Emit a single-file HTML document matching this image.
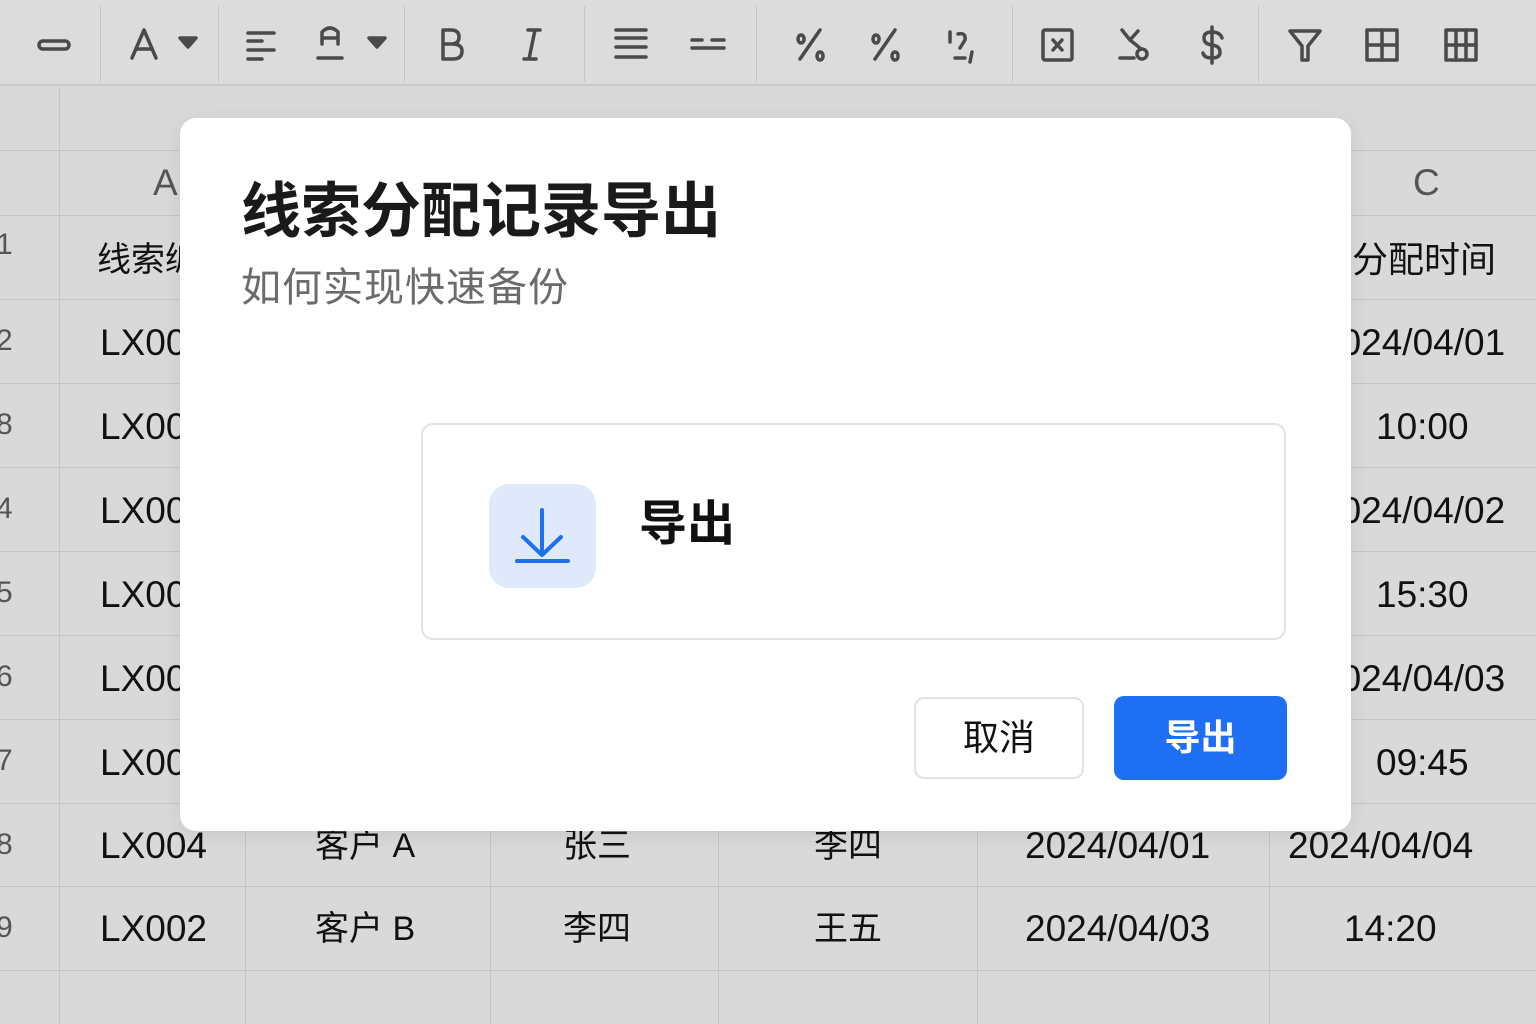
<!DOCTYPE html>
<html><head><meta charset="utf-8"><style>
*{margin:0;padding:0;box-sizing:border-box}
body{width:1536px;height:1024px;overflow:hidden;background:#d9d9d9;position:relative;font-family:"Liberation Sans","Noto Sans CJK SC",sans-serif;color:#111}
.tb{position:absolute;left:0;top:0;width:1536px;height:86px;background:#dcdcdc;border-bottom:2px solid #c8c8c8}
.sep{position:absolute;top:6px;width:1px;height:76px;background:#c6c6c6}
.ic{position:absolute;top:22px}
.h{position:absolute;height:1px;background:#c4c4c4;left:0;width:1536px}
.v{position:absolute;width:1px;background:#c4c4c4;top:150px;height:874px}
.t{position:absolute;font-size:37px;white-space:nowrap;line-height:40px}
.c{font-size:34px}
.rn{position:absolute;font-size:30px;color:#555;left:-4px;line-height:40px}
.dlg{position:absolute;left:180px;top:118px;width:1171px;height:713px;background:#fff;border-radius:16px;box-shadow:0 4px 20px rgba(0,0,0,.08)}
</style></head><body>
<div class="tb">
<div class="sep" style="left:100px"></div><div class="sep" style="left:218px"></div><div class="sep" style="left:404px"></div><div class="sep" style="left:584px"></div><div class="sep" style="left:756px"></div><div class="sep" style="left:1012px"></div><div class="sep" style="left:1258px"></div>
<svg class="ic" style="left:0" width="1536" height="50" viewBox="0 22 1536 50" fill="none" stroke="#4a4a4a" stroke-width="3.5" stroke-linecap="round" stroke-linejoin="round">
<rect x="39" y="41" width="30" height="8" rx="4"/>
<path d="M132 58 L144 30 L156 58 M136 49 H152"/>
<path d="M180 38 H196 L188 47 Z" fill="#4a4a4a"/>
<path d="M248 33 H274 M248 41 H262 M248 50 H274 M248 59 H262"/>
<path d="M322 44 V32 Q330 24 338 32 V44 M322 38 H338 M318 58 H342"/>
<path d="M369 38 H385 L377 47 Z" fill="#4a4a4a"/>
<path d="M443 30 V59 H453 Q462 59 462 51 Q462 44 452 44 H443 M443 30 H451 Q459 30 459 37 Q459 44 451 44"/>
<path d="M528 30 H540 M524 59 H536 M535 30 L529 59"/>
<path d="M616 30 H646 M616 38 H646 M616 47 H646 M616 57 H646"/>
<path d="M692 40 H702 M712 40 H724 M692 48 H724"/>
<path d="M800 59 L820 30 M801 35 a3 4 0 1 0 0.1 0 M820 52 a3 4 0 1 0 0.1 0"/>
<path d="M875 59 L895 30 M876 35 a3 4 0 1 0 0.1 0 M895 52 a3 4 0 1 0 0.1 0"/>
<path d="M950 32 V42 M958 34 Q966 32 965 40 L960 48 M955 58 H965 M972 52 L970 62"/>
<rect x="1043" y="30" width="29" height="30" rx="2"/><path d="M1053 40 L1062 50 M1062 40 L1053 50"/>
<path d="M1122 30 L1130 40 L1138 31 M1130 40 L1140 48 M1120 58 H1134"/><circle cx="1142" cy="54" r="5"/>
<path d="M1222 38 Q1220 32 1212 32 Q1204 32 1204 38 Q1204 44 1212 45 Q1220 46 1220 52 Q1220 58 1212 58 Q1204 58 1203 53 M1212 27 V63"/>
<path d="M1290 31 H1320 L1308 46 V60 H1302 V46 Z"/>
<rect x="1367" y="30" width="30" height="30"/><path d="M1382 30 V60 M1367 45 H1397"/>
<rect x="1446" y="30" width="30" height="30"/><path d="M1456 30 V60 M1466 30 V60 M1446 45 H1476"/>
</svg>
</div>
<div class="v" style="left:59px;top:88px;height:936px"></div><div class="v" style="left:245px"></div><div class="v" style="left:490px"></div><div class="v" style="left:718px"></div><div class="v" style="left:977px"></div><div class="v" style="left:1269px"></div>
<div class="h" style="top:150px"></div><div class="h" style="top:215px"></div><div class="h" style="top:299px"></div><div class="h" style="top:383px"></div><div class="h" style="top:467px"></div><div class="h" style="top:551px"></div><div class="h" style="top:635px"></div><div class="h" style="top:719px"></div><div class="h" style="top:803px"></div><div class="h" style="top:886px"></div><div class="h" style="top:970px"></div>
<div class="t" style="left:153px;top:163px;color:#555">A</div>
<div class="t" style="left:1413px;top:163px;color:#555">C</div>
<div class="rn" style="top:225px">1</div><div class="rn" style="top:321px">2</div><div class="rn" style="top:405px">8</div><div class="rn" style="top:489px">4</div><div class="rn" style="top:573px">5</div><div class="rn" style="top:657px">6</div><div class="rn" style="top:741px">7</div><div class="rn" style="top:825px">8</div><div class="rn" style="top:908px">9</div>
<div class="t c" style="left:97px;top:240px">线索编号</div>
<div class="t c" style="left:1352px;top:240px;font-size:36px">分配时间</div>
<div class="t" style="left:100px;top:323px">LX001</div><div class="t" style="left:100px;top:407px">LX002</div><div class="t" style="left:100px;top:491px">LX003</div><div class="t" style="left:100px;top:575px">LX004</div><div class="t" style="left:100px;top:659px">LX005</div><div class="t" style="left:100px;top:743px">LX006</div>
<div class="t" style="left:1320px;top:323px">2024/04/01</div><div class="t" style="left:1376px;top:407px">10:00</div><div class="t" style="left:1320px;top:491px">2024/04/02</div><div class="t" style="left:1376px;top:575px">15:30</div><div class="t" style="left:1320px;top:659px">2024/04/03</div><div class="t" style="left:1376px;top:743px">09:45</div>
<div class="t" style="left:100px;top:826px">LX004</div><div class="t c" style="left:315px;top:826px">客户 A</div><div class="t c" style="left:563px;top:826px">张三</div><div class="t c" style="left:814px;top:826px">李四</div><div class="t" style="left:1025px;top:826px">2024/04/01</div><div class="t" style="left:1288px;top:826px">2024/04/04</div>
<div class="t" style="left:100px;top:909px">LX002</div><div class="t c" style="left:315px;top:909px">客户 B</div><div class="t c" style="left:563px;top:909px">李四</div><div class="t c" style="left:814px;top:909px">王五</div><div class="t" style="left:1025px;top:909px">2024/04/03</div><div class="t" style="left:1344px;top:909px">14:20</div>
<div class="dlg">
<div style="position:absolute;left:61px;top:54px;font-size:60px;font-weight:bold;line-height:80px;color:#1a1a1a">线索分配记录导出</div>
<div style="position:absolute;left:61px;top:146px;font-size:40px;letter-spacing:1px;line-height:48px;color:#6b6b6b">如何实现快速备份</div>
<div style="position:absolute;left:241px;top:305px;width:865px;height:217px;border:2px solid #e2e2e2;border-radius:12px">
<div style="position:absolute;left:66px;top:59px;width:107px;height:104px;background:#e0e9fb;border-radius:20px">
<svg width="107" height="104" viewBox="0 0 107 104" fill="none" stroke="#1f6ff5" stroke-width="4" stroke-linecap="round" stroke-linejoin="round"><path d="M53 26 V70 M34 53 L53 71 L72 53 M28 77 H79"/></svg>
</div>
<div style="position:absolute;left:216px;top:70px;font-size:48px;font-weight:bold;line-height:60px">导出</div>
</div>
<div style="position:absolute;left:734px;top:579px;width:170px;height:82px;border:2px solid #e2e2e2;border-radius:10px;font-size:36px;text-align:center;line-height:78px">取消</div>
<div style="position:absolute;left:934px;top:578px;width:173px;height:84px;background:#1f6ff5;border-radius:10px;font-size:36px;font-weight:bold;color:#fff;text-align:center;line-height:84px">导出</div>
</div>
</body></html>
